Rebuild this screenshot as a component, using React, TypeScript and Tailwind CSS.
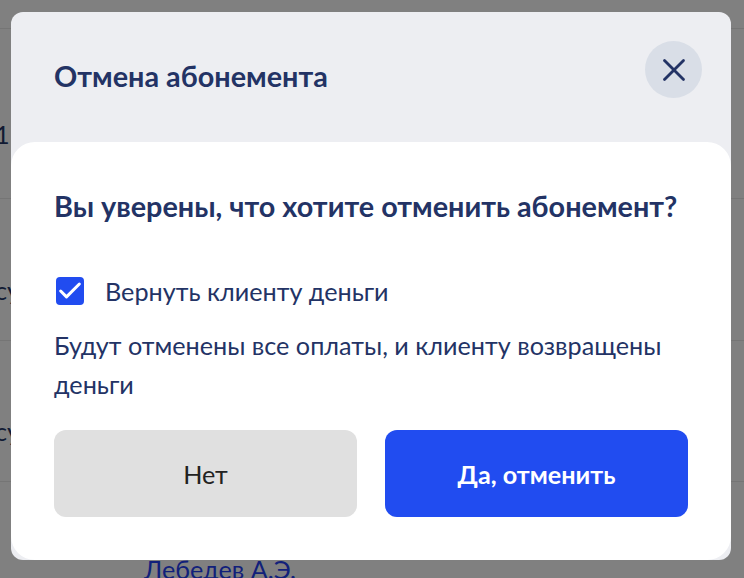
import { X, Check } from 'lucide-react'

// Строки таблицы под затемнением
function BackdropRows() {
  return (
    <div className="h-[578px] overflow-hidden bg-[#808080] text-[25.2px] leading-[30px] text-[#111a33]">
      <div className="h-[29px] border-b border-[#757575]" />
      <div className="flex h-[170px] items-center border-b border-[#757575] pt-[40px]">
        <span className="ml-[-5px]">1</span>
      </div>
      <div className="flex h-[142px] items-center border-b border-[#757575] pt-[40px]">
        <span className="ml-[-5px]">су</span>
      </div>
      <div className="flex h-[141px] items-center border-b border-[#757575] pt-[40px]">
        <span className="ml-[-5px]">су</span>
      </div>
      <div className="pl-[144px] pt-[72px] text-[#11207a]">Лебедев А.Э.</div>
    </div>
  )
}

export default function App() {
  return (
    <div className="relative h-[578px] w-[744px] overflow-hidden font-['Lato','Noto_Sans',sans-serif]">
      <BackdropRows />

      <div className="absolute left-[11px] top-[12px] h-[548px] w-[720px] overflow-hidden rounded-[12px] bg-[#edeef2]">
        <div className="flex h-[130px] items-start justify-between pl-[43px] pr-[29px]">
          <h1 className="mt-[47px] text-[28.8px] leading-[34px] font-bold text-[#233365]">Отмена абонемента</h1>
          <button className="mt-[29px] flex h-[57px] w-[57px] items-center justify-center rounded-full bg-[#d9dee7] text-[#233365]">
            <X size={38} strokeWidth={1.75} />
          </button>
        </div>

        <div className="h-[418px] rounded-[24px] bg-white pl-[43px] pr-[43px] pt-[47px]">
          <h2 className="text-[28.8px] leading-[34px] font-bold text-[#233365]">Вы уверены, что хотите отменить абонемент?</h2>

          <label className="mt-[53px] flex items-center gap-[21px] pl-[2px]">
            <span className="flex h-[28px] w-[28px] items-center justify-center rounded-[4px] bg-[#214cf0] text-white">
              <Check size={28} strokeWidth={2.6} className="shrink-0" />
            </span>
            <span className="text-[25.2px] leading-[30px] text-[#233365]">Вернуть клиенту деньги</span>
          </label>

          <p className="mt-[20px] text-[25.2px] leading-[39px] text-[#233365]">
            Будут отменены все оплаты, и клиенту возвращены деньги
          </p>

          <div className="mt-[26px] flex gap-[28px]">
            <button className="h-[87px] w-[303px] rounded-[12px] bg-[#e0e0e0] pt-[2px] text-[25.2px] text-[#222222]">Нет</button>
            <button className="h-[87px] w-[303px] rounded-[12px] bg-[#214cf0] pt-[2px] text-[25.2px] font-bold text-white">Да, отменить</button>
          </div>
        </div>
      </div>
    </div>
  )
}
